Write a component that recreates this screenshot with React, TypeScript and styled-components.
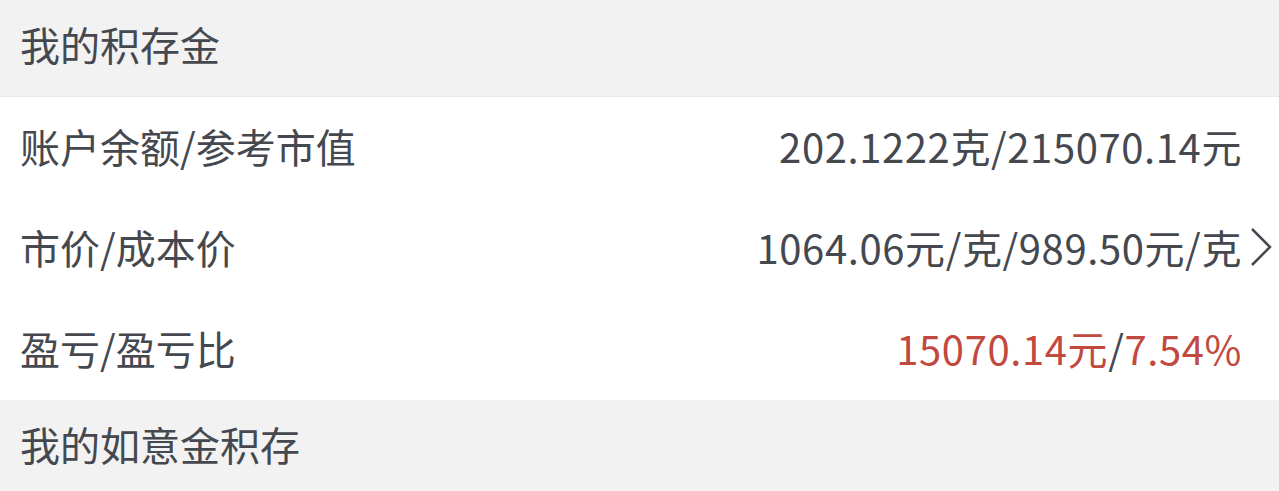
import styled, { createGlobalStyle } from 'styled-components';

const GlobalStyle = createGlobalStyle`
  html, body {
    margin: 0;
    padding: 0;
    background: #ffffff;
  }
  body {
    font-family: "Noto Sans CJK SC", "Noto Sans", sans-serif;
    color: #45484f;
  }
`;

const Page = styled.div`
  width: 1279px;
  display: flex;
  flex-direction: column;
`;

const SectionHeader = styled.div<{ $height: number }>`
  height: ${(p) => p.$height}px;
  display: flex;
  align-items: center;
  padding: 0 20px 8px;
  background: #f2f2f3;
  border-bottom: 1px solid #ebebed;
  font-size: 40px;
  color: #45484f;
  box-sizing: border-box;
`;

const Row = styled.div`
  height: 101px;
  display: flex;
  align-items: center;
  justify-content: space-between;
  padding: 0 37px 4px 20px;
  background: #ffffff;
  font-size: 40px;
  box-sizing: border-box;
`;

const Label = styled.div`
  color: #45484f;
`;

const Value = styled.div`
  display: flex;
  align-items: center;
  color: #45484f;
  letter-spacing: 0.6px;
`;

const Red = styled.span`
  color: #c14a3f;
`;

const Chevron = styled.svg`
  width: 22px;
  height: 40px;
  margin-left: 8px;
  margin-right: -30px;
`;

const rows = [
  { label: '账户余额/参考市值', value: '202.1222克/215070.14元' },
  { label: '市价/成本价', value: '1064.06元/克/989.50元/克', arrow: true },
];

const App = () => (
  <Page>
    <GlobalStyle />
    <SectionHeader $height={97}>我的积存金</SectionHeader>
    {rows.map((r) => (
      <Row key={r.label}>
        <Label>{r.label}</Label>
        <Value>
          {r.value}
          {r.arrow ? (
            <Chevron viewBox='0 0 22 40'>
              <polyline points='2,2 20,20 2,38' fill='none' stroke='#45484f' strokeWidth='2.5' />
            </Chevron>
          ) : null}
        </Value>
      </Row>
    ))}
    <Row>
      <Label>盈亏/盈亏比</Label>
      <Value>
        <Red>15070.14元</Red>/<Red>7.54%</Red>
      </Value>
    </Row>
    <SectionHeader $height={96}>我的如意金积存</SectionHeader>
  </Page>
);

export default App;
